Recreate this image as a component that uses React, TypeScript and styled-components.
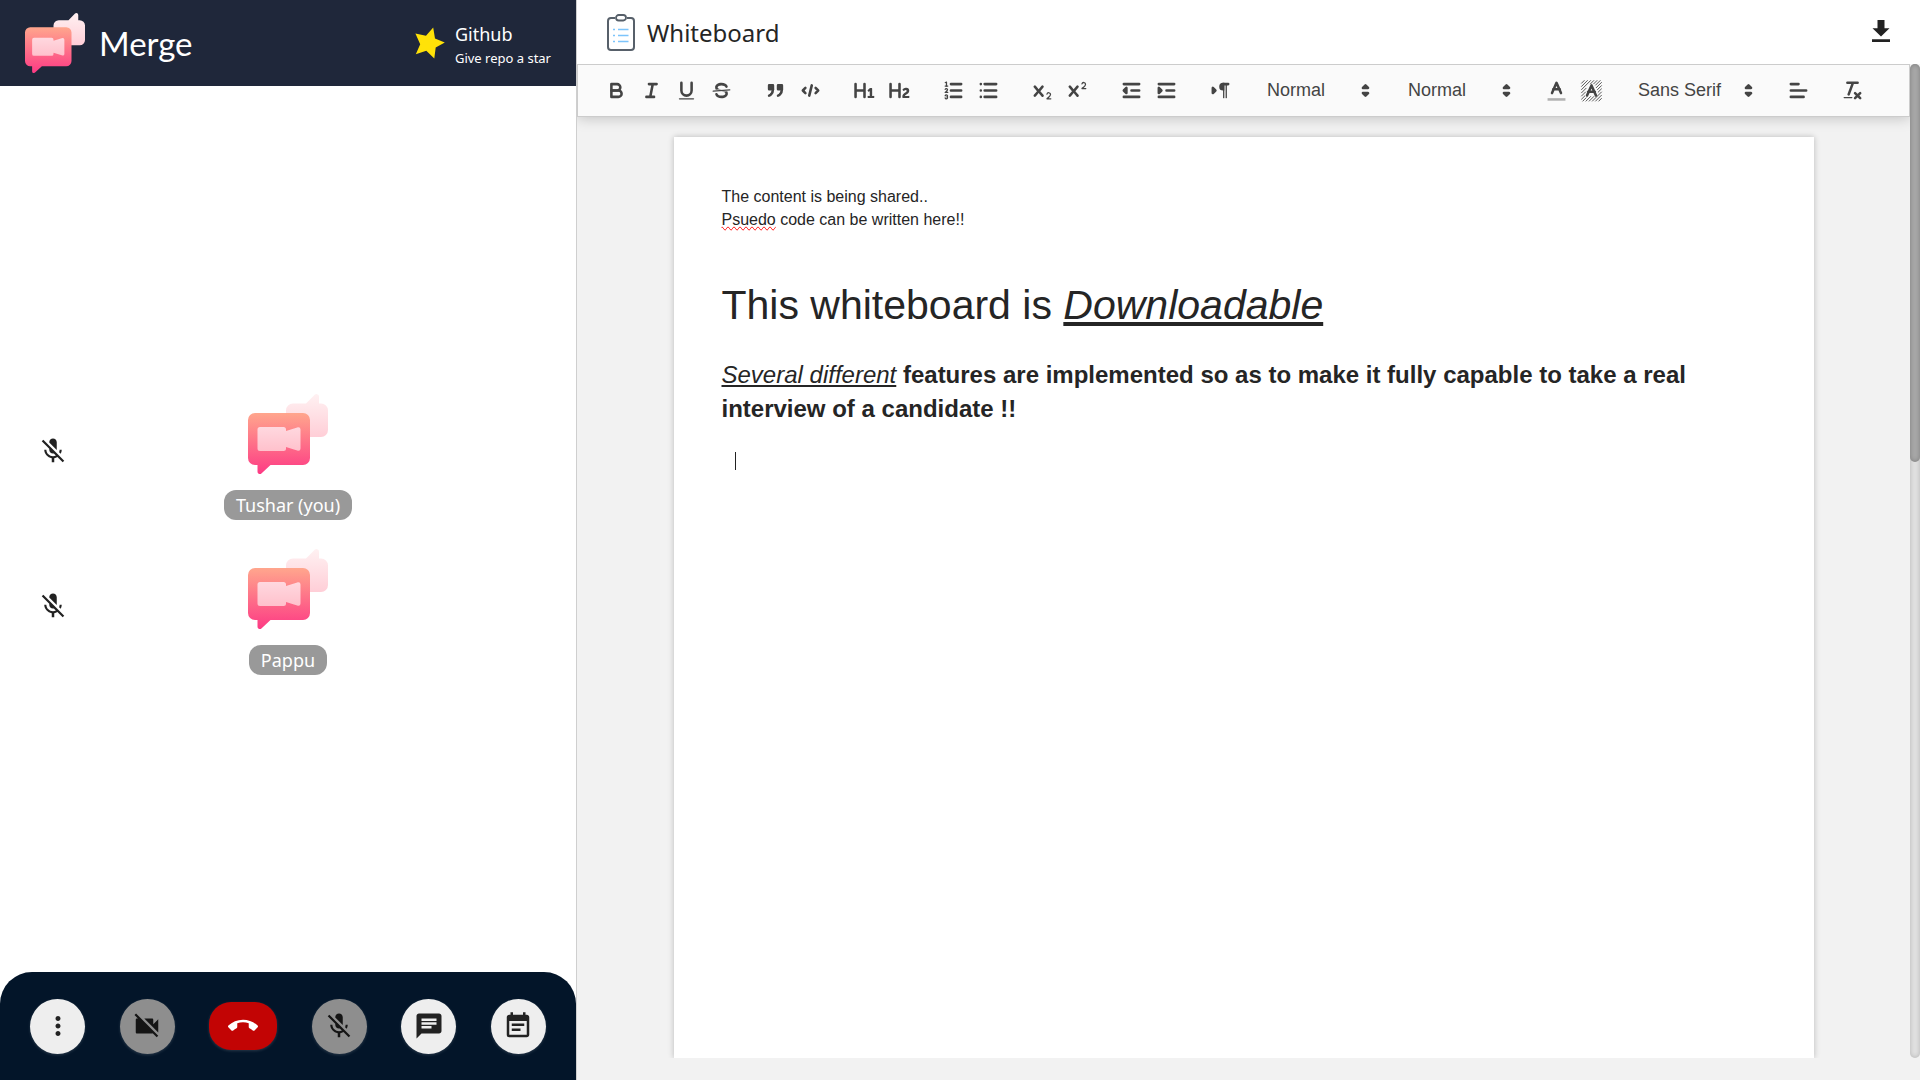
import React, { useId } from "react";
import styled, { createGlobalStyle } from "styled-components";
import {
  MdCallEnd,
  MdChat,
  MdEventNote,
  MdMicOff,
  MdMoreVert,
  MdVideocamOff,
} from "react-icons/md";

const GlobalStyle = createGlobalStyle`
  *, *::before, *::after { box-sizing: border-box; }
  html, body, #root { height: 100%; }
  body {
    margin: 0;
    background: #ffffff;
    color: #252525;
    font-family: "Noto Sans", "Open Sans", sans-serif;
  }
  button { border: 0; padding: 0; margin: 0; background: none; color: inherit; font: inherit; cursor: pointer; }
  h1, h2, p { margin: 0; }
`;

const Shell = styled.div`
  display: grid;
  grid-template-columns: 30% 1fr;
  height: 100vh;
  overflow: hidden;
`;

/* ---------- call side ---------- */

const CallPanel = styled.aside`
  display: flex;
  flex-direction: column;
  min-width: 0;
`;

const CallHeader = styled.header`
  display: flex;
  align-items: center;
  justify-content: space-between;
  height: 86px;
  padding: 0 25px;
  background: #1f273a;
  color: #ffffff;
`;

const Brand = styled.div`
  display: flex;
  align-items: center;
  gap: 14px;
`;

const BrandName = styled.span`
  font-family: Lato, sans-serif;
  font-size: 33px;
  line-height: 40px;
`;

const RepoLink = styled.a`
  display: flex;
  align-items: center;
  gap: 10px;
  color: inherit;
  text-decoration: none;
`;

const RepoText = styled.span`
  display: flex;
  flex-direction: column;
  padding-top: 3px;
`;

const RepoTitle = styled.span`
  font-size: 18px;
  line-height: 26px;
`;

const RepoHint = styled.span`
  font-size: 13px;
  line-height: 22px;
`;

const People = styled.ul`
  flex: 1;
  display: flex;
  flex-direction: column;
  justify-content: center;
  gap: 24px;
  margin: 0;
  padding: 16px 38px 0;
  list-style: none;
`;

const Person = styled.li`
  display: grid;
  grid-template-columns: 30px 1fr 30px;
  align-items: start;
  height: 131px;
`;

const MicState = styled.span`
  display: flex;
  align-items: center;
  height: 114px;
`;

const PersonCard = styled.div`
  display: flex;
  flex-direction: column;
  align-items: center;
  gap: 16px;
`;

const NameTag = styled.span`
  padding: 0 12px;
  border-radius: 12px;
  background: #999999;
  color: #ffffff;
  font-size: 18px;
  line-height: 30px;
`;

const Controls = styled.nav`
  display: flex;
  align-items: center;
  justify-content: space-between;
  height: 108px;
  padding: 0 30px;
  border-radius: 32px 32px 0 0;
  background: #031529;
`;

const RoundButton = styled.button<{ $off?: boolean }>`
  display: grid;
  place-items: center;
  width: 55px;
  height: 55px;
  border-radius: 50%;
  background: ${(p) => (p.$off ? "#8e8e8e" : "#eeeeee")};
  color: ${(p) => (p.$off ? "#151515" : "#222222")};
  box-shadow: 0 1px 3px rgba(255, 255, 255, 0.15);
`;

const HangUpButton = styled(RoundButton)`
  width: 68px;
  height: 48px;
  border-radius: 22px;
  background: #c20404;
  color: #ffffff;
`;

/* ---------- whiteboard side ---------- */

const Board = styled.main`
  display: flex;
  flex-direction: column;
  min-width: 0;
  padding-bottom: 22px;
  border-left: 1px solid #cfcfcf;
  background: #f2f2f2;
`;

const BoardHeader = styled.header`
  display: flex;
  align-items: center;
  justify-content: space-between;
  height: 64px;
  padding: 2px 30px 0;
  background: #ffffff;
`;

const BoardTitle = styled.h1`
  display: flex;
  align-items: center;
  gap: 12px;
  font-size: 24px;
  font-weight: 400;
  line-height: 36px;
`;

const Workspace = styled.div`
  flex: 1;
  display: grid;
  grid-template-columns: 1fr 10px;
  min-height: 0;
`;

const Editor = styled.section`
  display: flex;
  flex-direction: column;
  min-width: 0;
  min-height: 0;
  overflow: hidden;
`;

const Toolbar = styled.div`
  display: flex;
  flex: none;
  align-items: center;
  gap: 19px;
  height: 53px;
  padding: 0 21px;
  border: 1px solid #cccccc;
  background: #fafafa;
  color: #444444;
  box-shadow: 0 0 14px rgba(0, 0, 0, 0.24);
`;

const ToolGroup = styled.div`
  display: flex;
`;

const ToolButton = styled.button`
  display: grid;
  place-items: center;
  width: 35px;
  height: 30px;
`;

const Picker = styled.label<{ $width: number }>`
  position: relative;
  display: flex;
  align-items: center;
  width: ${(p) => p.$width}px;
  height: 30px;

  svg {
    position: absolute;
    right: 2px;
    pointer-events: none;
  }
`;

const PickerSelect = styled.select`
  appearance: none;
  width: 100%;
  height: 30px;
  padding: 0 0 2px 10px;
  border: 0;
  background: transparent;
  color: #444444;
  font: 500 18px/28px "Liberation Sans", Arial, sans-serif;
`;

const Paper = styled.article`
  flex: 1;
  width: min(1140px, 100% - 40px);
  margin: 20px auto 0;
  padding: 48px;
  background: #ffffff;
  box-shadow: 0 0 6px rgba(0, 0, 0, 0.24);
  font-family: "Liberation Sans", Arial, sans-serif;
  font-size: 16px;
  line-height: 23px;
  outline: none;
`;

const Misspelled = styled.span`
  text-decoration-line: spelling-error;
`;

const Headline = styled.h1`
  margin: 48px 0 27px;
  font-size: 41px;
  font-weight: 400;
  line-height: 52px;
`;

const Subhead = styled.h2`
  font-size: 24px;
  font-weight: 700;
  line-height: 34px;

  u { font-weight: 400; }
`;

const CaretLine = styled.p`
  display: flex;
  padding: 26px 13px 0;
`;

const Caret = styled.span`
  width: 1px;
  height: 18px;
  background: #222222;
`;

const ScrollTrack = styled.div`
  border-radius: 5px;
  background: #e1e1e1;
  box-shadow: inset 0 0 5px rgba(0, 0, 0, 0.2);
`;

const ScrollThumb = styled.div`
  height: 40%;
  border-radius: 5px;
  background: #a8a8a8;
  box-shadow: inset 0 0 5px rgba(0, 0, 0, 0.25);
`;

/* ---------- drawings ---------- */

function Logo({ size }: { size: number }) {
  const id = useId();
  return (
    <svg width={size} height={size} viewBox="0 0 80 80" aria-hidden="true">
      <defs>
        <linearGradient id={`${id}f`} x1="0" y1="0" x2="0" y2="1">
          <stop offset="0" stopColor="#ffa68d" />
          <stop offset="1" stopColor="#fd3a84" />
        </linearGradient>
        <linearGradient id={`${id}b`} x1="0" y1="0" x2="0" y2="1">
          <stop offset="0" stopColor="#fff1f2" />
          <stop offset="1" stopColor="#ffced7" />
        </linearGradient>
        <linearGradient id={`${id}c`} x1="0" y1="0" x2="0" y2="1">
          <stop offset="0" stopColor="#ffd8df" />
          <stop offset="1" stopColor="#ffc1cc" />
        </linearGradient>
      </defs>
      <path
        fill={`url(#${id}b)`}
        d="M45 9.500h13L66.700.8Q68 -.4 69.700.4Q71 1 71 2.600V9.500h2a7 7 0 0 1 7 7V36a7 7 0 0 1-7 7H45a7 7 0 0 1-7-7V16.500a7 7 0 0 1 7-7Z"
      />
      <path
        fill={`url(#${id}f)`}
        d="M7 19H55a7 7 0 0 1 7 7V64a7 7 0 0 1-7 7H22.500L13.400 79.400Q11.800 80.600 10.300 79.600Q9.500 79 9.500 77.600V71H7a7 7 0 0 1-7-7V26a7 7 0 0 1 7-7Z"
      />
      <path
        fill={`url(#${id}c)`}
        d="M12 33H35.500a2.500 2.500 0 0 1 2.500 2.500V37L50 33.200Q52.500 33 52.500 35.500V54.500Q52.500 57 50 56.700L38 53V54.500a2.500 2.500 0 0 1-2.500 2.500H12a2.500 2.500 0 0 1-2.500-2.500V35.500A2.500 2.500 0 0 1 12 33Z"
      />
    </svg>
  );
}

function Star() {
  return (
    <svg width="30" height="32" viewBox="0 0 30 32" aria-hidden="true">
      <path
        fill="#ffe208"
        d="M18.200.5L20 11.500L29.800 15.500L20.700 20.600L19.300 31.500L11.300 23.700L.8 27.200L5.200 17.200L.4 6.500L11 8.800Z"
      />
    </svg>
  );
}

function Clipboard() {
  return (
    <svg width="28" height="38" viewBox="0 0 28 38" fill="none" aria-hidden="true">
      <path
        d="M8 4H4a3 3 0 0 0-3 3V33a3 3 0 0 0 3 3H24a3 3 0 0 0 3-3V7a3 3 0 0 0-3-3H20"
        stroke="#57606a"
        strokeWidth="2"
      />
      <rect x="9" y="1" width="10" height="5.500" rx="2.700" stroke="#57606a" strokeWidth="1.800" />
      <path d="M11 15.500H21.500M11 21.500H21.500M11 27.500H21.500" stroke="#7cc4fb" strokeWidth="1.500" />
      <path d="M6 15.500H8M6 21.500H8M6 27.500H8" stroke="#7cc4fb" strokeWidth="1.500" />
    </svg>
  );
}

function Download() {
  return (
    <svg width="18" height="22" viewBox="0 0 18 22" fill="#222222" aria-hidden="true">
      <path d="M5.500 0H12.500V8.300H17.500L9 16.500L.5 8.300H5.500ZM0 19.300H18V22H0Z" />
    </svg>
  );
}

const Glyph = styled.svg.attrs({ viewBox: "0 0 18 18", "aria-hidden": true })`
  width: 23px;
  height: 23px;
  fill: none;
  stroke: currentColor;
  stroke-width: 2;
  stroke-linecap: round;
  stroke-linejoin: round;

  .fill { fill: currentColor; stroke: none; }
  .both { fill: currentColor; }
  .thin { stroke-width: 1; }
  .soft { opacity: 0.4; stroke-linecap: butt; }
  .hatch { stroke-width: 0.7; stroke-linecap: butt; }
`;

const CROSS =
  "M9.65,5.241a1,1,0,0,0-1.409.108L6,7.964,3.759,5.349A1,1,0,0,0,2.192,6.59178Q2.21541,6.6213,2.241,6.649L4.684,9.5,2.241,12.35A1,1,0,0,0,3.71,13.70722q0.02557-.02768.049-0.05722L6,11.036,8.241,13.65a1,1,0,1,0,1.567-1.24277Q9.78459,12.3777,9.759,12.35L7.316,9.5,9.759,6.651A1,1,0,0,0,9.65,5.241Z";

type Tool = { label: string; art: React.ReactNode };

const styleTools: Tool[] = [
  {
    label: "Bold",
    art: (
      <>
        <path d="M5,4H9.5A2.5,2.5,0,0,1,12,6.5v0A2.5,2.5,0,0,1,9.5,9H5Z" />
        <path d="M5,9h5.500A2.5,2.5,0,0,1,13,11.5v0A2.5,2.5,0,0,1,10.500,14H5Z" />
      </>
    ),
  },
  { label: "Italic", art: <path d="M7,4H13M5,14H11M8,14L10,4" /> },
  {
    label: "Underline",
    art: (
      <>
        <path d="M5,3V9a4.012,4.012,0,0,0,4,4H9a4.012,4.012,0,0,0,4-4V3" />
        <rect className="fill" height="1" rx="0.5" width="12" x="3" y="15" />
      </>
    ),
  },
  {
    label: "Strike",
    art: (
      <>
        <path className="thin" d="M15.5,8.5L2.5,9.5" />
        <path
          className="fill"
          d="M9.007,8C6.542,7.791,6,7.519,6,6.5,6,5.792,7.283,5,9,5c1.571,0,2.765.679,2.969,1.309a1,1,0,0,0,1.9-.617C13.356,4.106,11.354,3,9,3,6.2,3,4,4.538,4,6.5a3.2,3.2,0,0,0,.5,1.843Z"
        />
        <path
          className="fill"
          d="M8.984,10C11.457,10.208,12,10.479,12,11.5c0,0.708-1.283,1.5-3,1.5-1.571,0-2.765-.679-2.969-1.309a1,1,0,1,0-1.9.617C4.644,13.894,6.646,15,9,15c2.8,0,5-1.538,5-3.5a3.2,3.2,0,0,0-.5-1.843Z"
        />
      </>
    ),
  },
];

const blockTools: Tool[] = [
  {
    label: "Quote",
    art: (
      <>
        <rect className="both" height="3" width="3" x="4" y="5" />
        <rect className="both" height="3" width="3" x="11" y="5" />
        <path className="both" d="M7,8c0,4.031-3,5-3,5" />
        <path className="both" d="M14,8c0,4.031-3,5-3,5" />
      </>
    ),
  },
  { label: "Code", art: <path d="M5,7L3,9L5,11M13,7L15,9L13,11M10,5L8,13" /> },
];

const headingTools: Tool[] = [
  {
    label: "Heading 1",
    art: (
      <path
        className="fill"
        d="M10,4V14a1,1,0,0,1-2,0V10H3v4a1,1,0,0,1-2,0V4A1,1,0,0,1,3,4V8H8V4a1,1,0,0,1,2,0Zm6.06787,9.209H14.98975V7.59863a.54085.54085,0,0,0-.605-.60547h-.62744a1.01119,1.01119,0,0,0-.748.29688L11.645,8.56641a.5435.5435,0,0,0-.022.8584l.28613.30762a.53861.53861,0,0,0,.84717.0332l.09912-.08789a1.2137,1.2137,0,0,0,.2417-.35254h.02246s-.01123.30859-.01123.60547V13.209H12.041a.54085.54085,0,0,0-.605.60547v.43945a.54085.54085,0,0,0,.605.60547h4.02686a.54085.54085,0,0,0,.605-.60547v-.43945A.54085.54085,0,0,0,16.06787,13.209Z"
      />
    ),
  },
  {
    label: "Heading 2",
    art: (
      <path
        className="fill"
        d="M16.73975,13.81445v.43945a.54085.54085,0,0,1-.605.60547H11.855a.58392.58392,0,0,1-.64893-.60547V14.0127c0-2.90527,3.39941-3.42187,3.39941-4.55469a.77675.77675,0,0,0-.84717-.78125,1.17684,1.17684,0,0,0-.83594.38477c-.2749.26367-.561.374-.85791.13184l-.4292-.34082c-.30811-.24219-.38525-.51758-.1543-.81445a2.97155,2.97155,0,0,1,2.45361-1.17676,2.45393,2.45393,0,0,1,2.68408,2.40918c0,2.45312-3.1792,2.92676-3.27832,3.93848h2.79443A.54085.54085,0,0,1,16.73975,13.81445ZM9,3A.99974.99974,0,0,0,8,4V8H3V4A1,1,0,0,0,1,4V14a1,1,0,0,0,2,0V10H8v4a1,1,0,0,0,2,0V4A.99974.99974,0,0,0,9,3Z"
      />
    ),
  },
];

const listTools: Tool[] = [
  {
    label: "Numbered list",
    art: (
      <>
        <path d="M7,4H15M7,9H15M7,14H15" />
        <path className="thin" d="M2.5,5.5H4.5" />
        <path
          className="fill"
          d="M3.5,6A0.5,0.5,0,0,1,3,5.5V3.085l-0.276.138A0.5,0.5,0,0,1,2.053,3c-0.124-.247-0.023-0.324.224-0.447l1-.5A0.5,0.5,0,0,1,4,2.5v3A0.5,0.5,0,0,1,3.5,6Z"
        />
        <path className="thin" d="M4.5,10.5h-2c0-.234,1.85-1.076,1.85-2.234A0.959,0.959,0,0,0,2.5,8.156" />
        <path
          className="thin"
          d="M2.5,14.846a0.959,0.959,0,0,0,1.85-.109A0.7,0.7,0,0,0,3.75,14a0.688,0.688,0,0,0,.6-0.736,0.959,0.959,0,0,0-1.85-.109"
        />
      </>
    ),
  },
  { label: "Bulleted list", art: <path d="M6,4H15M6,9H15M6,14H15M3,4H3M3,9H3M3,14H3" /> },
];

const scriptTools: Tool[] = [
  {
    label: "Subscript",
    art: (
      <>
        <path
          className="fill"
          d="M15.5,15H13.861a3.858,3.858,0,0,0,1.914-2.975,1.8,1.8,0,0,0-1.6-1.751A1.921,1.921,0,0,0,12.021,11.7a0.50013,0.50013,0,1,0,.957.291h0a0.914,0.914,0,0,1,1.053-.725,0.81,0.81,0,0,1,.744.762c0,1.076-1.16971,1.86982-1.93971,2.43082A1.45639,1.45639,0,0,0,12,15.5a0.5,0.5,0,0,0,.5.5h3A0.5,0.5,0,0,0,15.5,15Z"
        />
        <path className="fill" d={CROSS} />
      </>
    ),
  },
  {
    label: "Superscript",
    art: (
      <>
        <path
          className="fill"
          d="M15.5,7H13.861a4.015,4.015,0,0,0,1.914-2.975,1.8,1.8,0,0,0-1.6-1.751A1.922,1.922,0,0,0,12.021,3.7a0.5,0.5,0,1,0,.957.291,0.917,0.917,0,0,1,1.053-.725,0.81,0.81,0,0,1,.744.762c0,1.077-1.164,1.925-1.934,2.486A1.423,1.423,0,0,0,12,7.5a0.5,0.5,0,0,0,.5.5h3A0.5,0.5,0,0,0,15.5,7Z"
        />
        <path className="fill" d={CROSS} />
      </>
    ),
  },
];

const indentTools: Tool[] = [
  {
    label: "Outdent",
    art: (
      <>
        <path d="M3,14H15M3,4H15M9,9H15" />
        <path className="both" d="M5,7V11L3,9Z" />
      </>
    ),
  },
  {
    label: "Indent",
    art: (
      <>
        <path d="M3,14H15M3,4H15M9,9H15" />
        <path className="both" d="M3,7V11L5,9Z" />
      </>
    ),
  },
];

const directionTools: Tool[] = [
  {
    label: "Text direction",
    art: (
      <>
        <path className="both" d="M3,11L5,9L3,7Z" />
        <path d="M15,4H11" />
        <path className="fill" d="M11,3a3,3,0,0,0,0,6h1V3H11Z" />
        <rect className="fill" height="11" width="1" x="11" y="4" />
        <rect className="fill" height="11" width="1" x="13" y="4" />
      </>
    ),
  },
];

const colorTools: Tool[] = [
  {
    label: "Text color",
    art: (
      <>
        <path className="soft" d="M2,16H16" />
        <path d="M5.5,11L9,3L12.5,11M11.63,8H6.38" />
      </>
    ),
  },
  {
    label: "Highlight color",
    art: (
      <>
        <path
          className="hatch"
          d="M1,3.500L3.500,1M1,6L6,1M1,8.500L8.500,1M1,11L5,7M8,4L11,1M1,13.500L4.500,10M10.500,4L13.500,1M1,16L4,13M12,5L16,1M2,17.500L5,14.500M12.500,7L17,2.500M4.500,17.500L8.500,13.500M13.500,8.500L17,5M7,17.500L11,13.500M14,10.500L17,7.500M9.500,17.500L17,10M12,17.500L17,12.500M14.500,17.500L17,15"
        />
        <path d="M5.500,13L9,5L12.500,13M11.630,10H6.380" />
      </>
    ),
  },
];

const alignTools: Tool[] = [{ label: "Align", art: <path d="M3,9H15M3,14H13M3,4H9" /> }];

const cleanTools: Tool[] = [
  {
    label: "Clear formatting",
    art: (
      <>
        <path d="M5,3H13M6,12L9.35,3M11,11L15,15M15,11L11,15" />
        <rect className="fill" height="1" rx="0.5" width="7" x="2" y="14" />
      </>
    ),
  },
];

function Tools({ items }: { items: Tool[] }) {
  return (
    <ToolGroup>
      {items.map((t) => (
        <ToolButton key={t.label} type="button" aria-label={t.label}>
          <Glyph>{t.art}</Glyph>
        </ToolButton>
      ))}
    </ToolGroup>
  );
}

function PickerField({ label, value, width }: { label: string; value: string; width: number }) {
  return (
    <Picker $width={width}>
      <PickerSelect aria-label={label} defaultValue={value}>
        <option>{value}</option>
      </PickerSelect>
      <Glyph>
        <path className="both" d="M7,11L9,13L11,11ZM7,7L9,5L11,7Z" />
      </Glyph>
    </Picker>
  );
}

const people = ["Tushar (you)", "Pappu"];

export default function App() {
  return (
    <>
      <GlobalStyle />
      <Shell>
        <CallPanel>
          <CallHeader>
            <Brand>
              <Logo size={60} />
              <BrandName>Merge</BrandName>
            </Brand>
            <RepoLink href="#github">
              <Star />
              <RepoText>
                <RepoTitle>Github</RepoTitle>
                <RepoHint>Give repo a star</RepoHint>
              </RepoText>
            </RepoLink>
          </CallHeader>
          <People>
            {people.map((name) => (
              <Person key={name}>
                <MicState>
                  <MdMicOff size={30} color="#222222" />
                </MicState>
                <PersonCard>
                  <Logo size={80} />
                  <NameTag>{name}</NameTag>
                </PersonCard>
              </Person>
            ))}
          </People>
          <Controls aria-label="Call controls">
            <RoundButton type="button" aria-label="More">
              <MdMoreVert size={30} />
            </RoundButton>
            <RoundButton type="button" aria-label="Camera off" $off>
              <MdVideocamOff size={30} />
            </RoundButton>
            <HangUpButton type="button" aria-label="Hang up">
              <MdCallEnd size={30} />
            </HangUpButton>
            <RoundButton type="button" aria-label="Microphone off" $off>
              <MdMicOff size={30} />
            </RoundButton>
            <RoundButton type="button" aria-label="Chat">
              <MdChat size={30} />
            </RoundButton>
            <RoundButton type="button" aria-label="Notes">
              <MdEventNote size={30} />
            </RoundButton>
          </Controls>
        </CallPanel>

        <Board>
          <BoardHeader>
            <BoardTitle>
              <Clipboard />
              Whiteboard
            </BoardTitle>
            <button type="button" aria-label="Download">
              <Download />
            </button>
          </BoardHeader>
          <Workspace>
            <Editor>
              <Toolbar role="toolbar" aria-label="Formatting">
                <Tools items={styleTools} />
                <Tools items={blockTools} />
                <Tools items={headingTools} />
                <Tools items={listTools} />
                <Tools items={scriptTools} />
                <Tools items={indentTools} />
                <Tools items={directionTools} />
                <PickerField label="Size" value="Normal" width={122} />
                <PickerField label="Heading" value="Normal" width={122} />
                <Tools items={colorTools} />
                <PickerField label="Font" value="Sans Serif" width={134} />
                <Tools items={alignTools} />
                <Tools items={cleanTools} />
              </Toolbar>
              <Paper>
                <p>The content is being shared..</p>
                <p>
                  <Misspelled>Psuedo</Misspelled> code can be written here!!
                </p>
                <Headline>
                  This whiteboard is{" "}
                  <u>
                    <em>Downloadable</em>
                  </u>
                </Headline>
                <Subhead>
                  <u>
                    <em>Several different</em>
                  </u>{" "}
                  features are implemented so as to make it fully capable to take a real interview of
                  a candidate !!
                </Subhead>
                <CaretLine>
                  <Caret />
                </CaretLine>
              </Paper>
            </Editor>
            <ScrollTrack>
              <ScrollThumb />
            </ScrollTrack>
          </Workspace>
        </Board>
      </Shell>
    </>
  );
}
